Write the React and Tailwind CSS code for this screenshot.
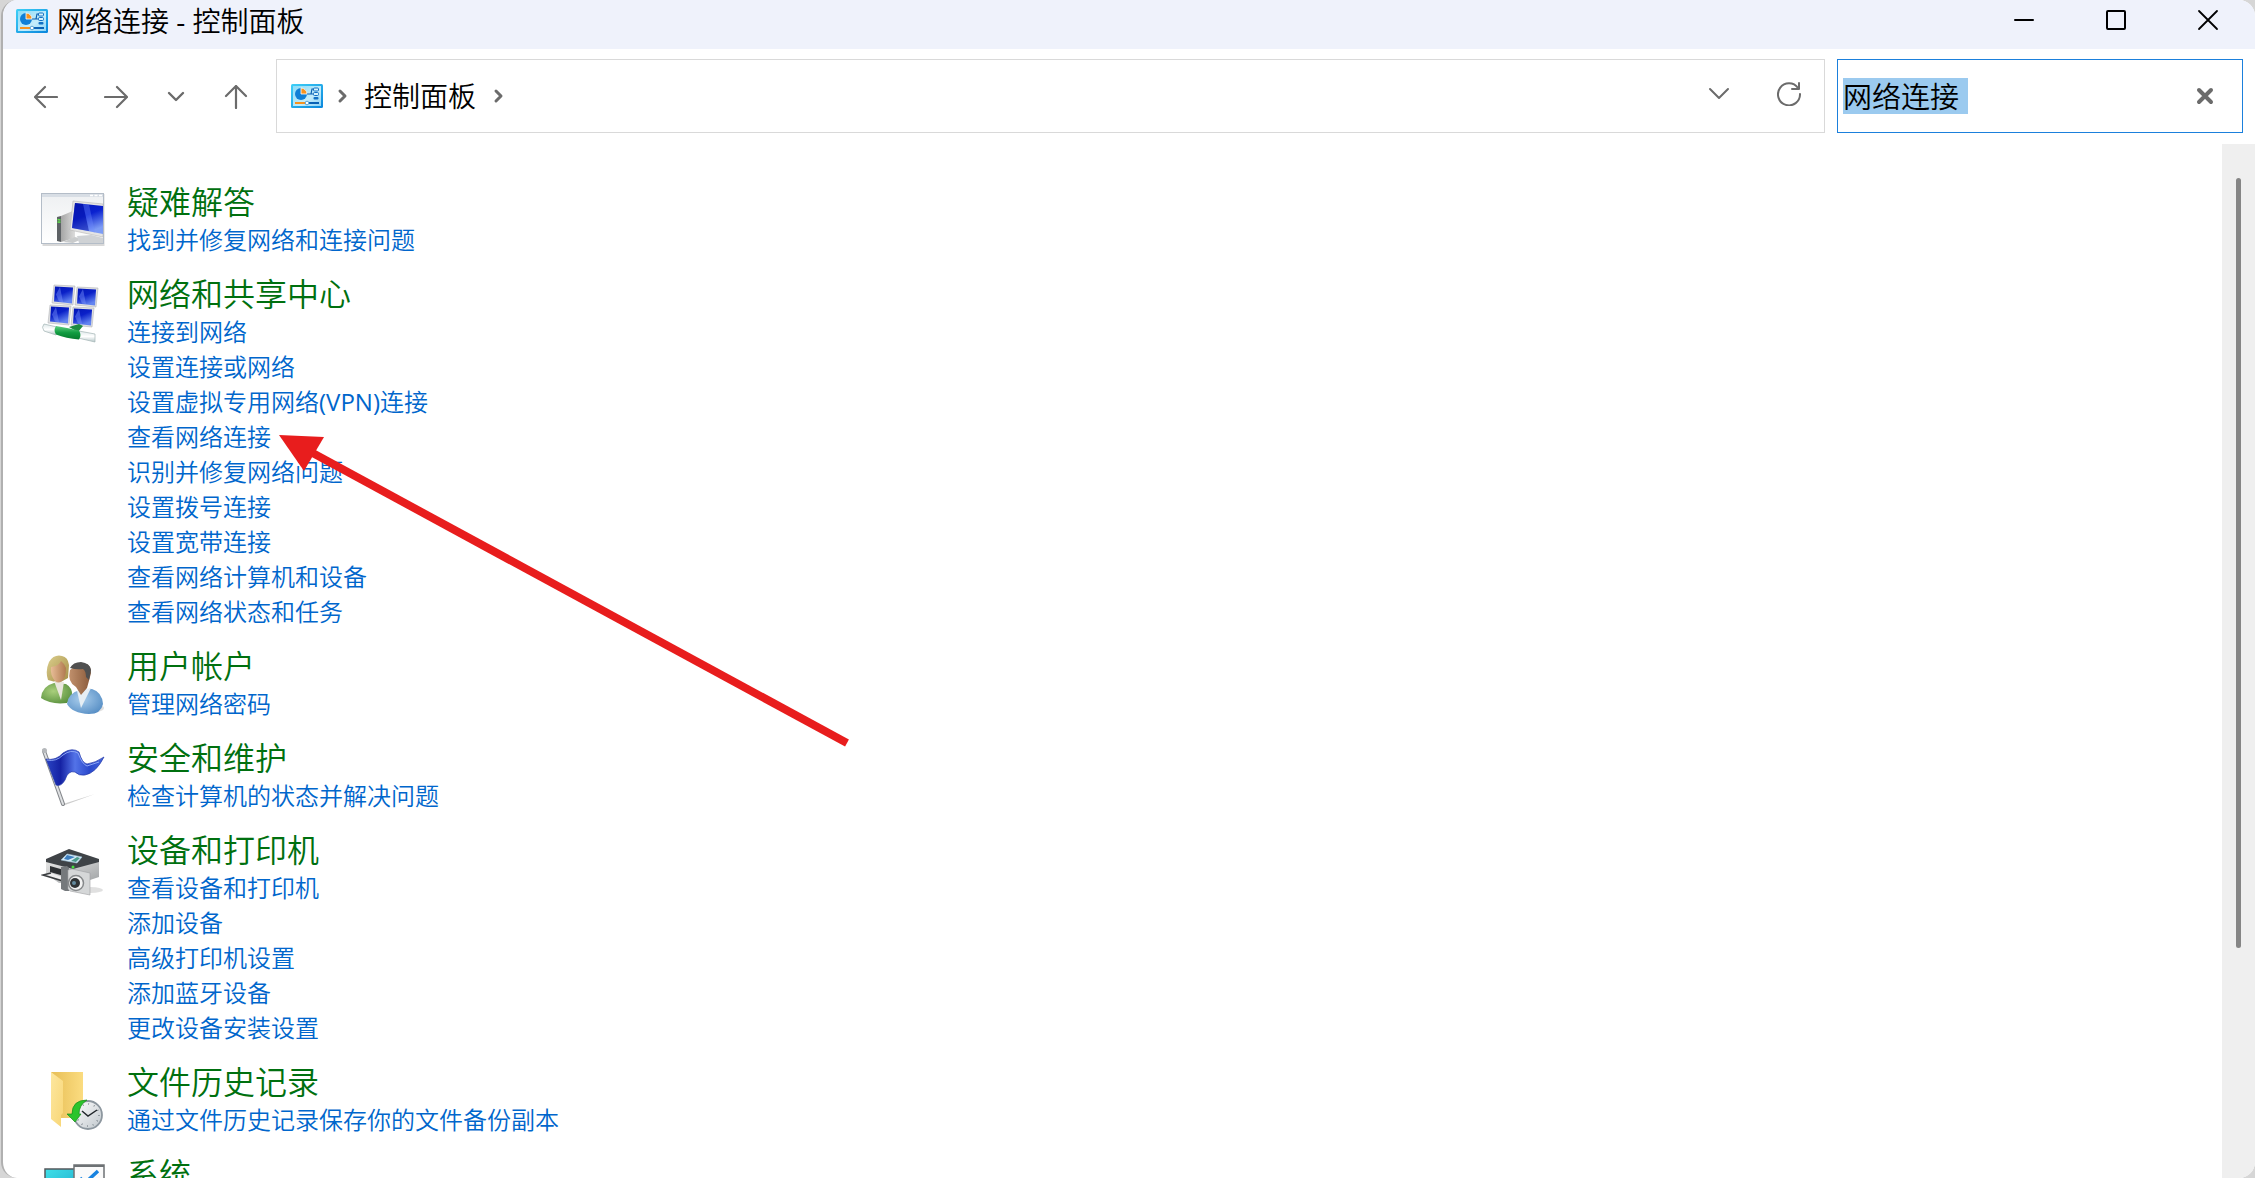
import React from 'react';

const ControlPanelIcon = () => (
    <svg viewBox="0 0 32 26" className="h-[26px] w-8 shrink-0" aria-hidden="true">
        <defs>
            <linearGradient id="cpFrame" x1="0" y1="0" x2="1" y2="1">
                <stop offset="0" stopColor="#3fd0f7" />
                <stop offset="1" stopColor="#0a86dc" />
            </linearGradient>
            <linearGradient id="cpFace" x1="0" y1="0" x2="1" y2="1">
                <stop offset="0" stopColor="#8adcf8" />
                <stop offset="0.6" stopColor="#c4ecfb" />
                <stop offset="1" stopColor="#8fd4f5" />
            </linearGradient>
        </defs>
        <rect x="0" y="1" width="32" height="24" rx="1.5" fill="url(#cpFrame)" />
        <rect x="2" y="3" width="28" height="20" fill="url(#cpFace)" />
        <circle cx="10" cy="11" r="6" fill="#0f7fd6" />
        <path d="M10 11V5a6 6 0 0 1 6 6z" fill="#f7931e" stroke="#fff" strokeWidth="0.8" />
        <path d="M16 11h4l1-5h2M20 11h3" stroke="#0a5cad" strokeWidth="1.2" fill="none" />
        <rect x="22.5" y="5" width="5" height="3" rx="1" fill="#d5f2fd" stroke="#1270c4" />
        <rect x="22.5" y="9.5" width="5" height="3" rx="1" fill="#d5f2fd" stroke="#1270c4" />
        <rect x="22.5" y="14" width="5" height="2.5" rx="1" fill="#1270c4" />
        <path d="M4 20h10" stroke="#f7931e" strokeWidth="2" />
        <path d="M18 20h10" stroke="#0a62b5" strokeWidth="2" />
        <circle cx="16" cy="20" r="1.8" fill="#fff" stroke="#3b8fc9" strokeWidth="0.8" />
    </svg>
);

const TroubleshootIcon = () => (
    <svg viewBox="0 0 64 56" className="h-14 w-16" aria-hidden="true">
        <defs>
            <linearGradient id="tsScreen" x1="0" y1="0" x2="0.4" y2="1">
                <stop offset="0" stopColor="#0618b4" />
                <stop offset="0.5" stopColor="#0a22d0" />
                <stop offset="1" stopColor="#7d9cf5" />
            </linearGradient>
            <linearGradient id="tsWall" x1="0" y1="0" x2="0" y2="1">
                <stop offset="0" stopColor="#eef0f2" />
                <stop offset="1" stopColor="#fff" />
            </linearGradient>
            <linearGradient id="tsTower" x1="0" y1="0" x2="1" y2="0">
                <stop offset="0" stopColor="#a5a5a5" />
                <stop offset="1" stopColor="#dcdcdc" />
            </linearGradient>
        </defs>
        <rect x="1.5" y="3" width="62" height="52" fill="#000" opacity="0.15" />
        <rect x="0.5" y="2.5" width="62" height="50" fill="url(#tsWall)" stroke="#b4bdc8" />
        <rect x="1" y="3" width="61" height="3" fill="#d8dee5" />
        <path d="M49 4.5h3M53.5 4.5h3M58 4.5h3" stroke="#fff" strokeWidth="1.5" />
        <path d="M16 26l4-1v26l-4-1z" fill="#5d6165" />
        <path d="M16.5 28.5l3 .5M16.5 31l3 .3" stroke="#5ee04b" strokeWidth="1.5" />
        <path d="M20 25l14-6v28l-14 4z" fill="url(#tsTower)" />
        <path d="M22 51l12-5 7 2-9 4z" fill="#c9cbcc" />
        <path d="M36 45l14-1 12 3v5H38z" fill="#cfd2d5" />
        <path d="M32 10l30 3v33L29 39z" fill="#e4e4e4" stroke="#b5b5b5" strokeWidth="0.6" />
        <path d="M34 12l28 3v28L31 37z" fill="url(#tsScreen)" />
        <path d="M34 12l8 1 6 27-17-3z" fill="#0312a8" opacity="0.5" />
        <path d="M42 13l6 .6 6 28-6-1.500z" fill="#6f8cff" opacity="0.35" />
    </svg>
);

const monitors = [
    [12, 2],
    [35, 4],
    [8, 22],
    [31, 24],
];

const NetworkIcon = () => (
    <svg viewBox="0 0 64 62" className="h-[62px] w-16" aria-hidden="true">
        <defs>
            <linearGradient id="netScreen" x1="0" y1="0" x2="0.5" y2="1">
                <stop offset="0" stopColor="#0316b5" />
                <stop offset="0.5" stopColor="#0a20c8" />
                <stop offset="1" stopColor="#6384f0" />
            </linearGradient>
            <linearGradient id="netTube" x1="0" y1="0" x2="0" y2="1">
                <stop offset="0" stopColor="#dfe9ea" />
                <stop offset="0.5" stopColor="#fff" />
                <stop offset="1" stopColor="#b5c6c8" />
            </linearGradient>
            <linearGradient id="netPlug" x1="0" y1="0" x2="0" y2="1">
                <stop offset="0" stopColor="#5fcf80" />
                <stop offset="0.5" stopColor="#109c40" />
                <stop offset="1" stopColor="#067a2c" />
            </linearGradient>
        </defs>
        {monitors.map(([x, y]) => (
            <g key={`${x}-${y}`}>
                <path d={`M${x + 1} ${y}l21 1-2 19-21-2z`} fill="#dedfe0" stroke="#b3b5b8" strokeWidth="0.6" />
                <path d={`M${x + 2} ${y + 1.5}l18 1-1 16-18-2z`} fill="url(#netScreen)" />
                <path d={`M${x + 7} ${y + 2}l3 15-4-.5-3-7z`} fill="#86a0ff" opacity="0.4" />
            </g>
        ))}
        <path d="M28 44l10-3 4 2-5 6z" fill="#1d8b42" />
        <path d="M3 41l13 3-1 8-12-4q-3-4 0-7z" fill="url(#netTube)" stroke="#a3b5b5" strokeWidth="0.7" />
        <path d="M38 48l16 3v8l-17-4z" fill="url(#netTube)" stroke="#a3b5b5" strokeWidth="0.7" />
        <path d="M15 43q12 2 23 4.5 3 5 0 9-13-1-23-5-3-4 0-8.5z" fill="url(#netPlug)" />
    </svg>
);

const UsersIcon = () => (
    <svg viewBox="0 0 64 62" className="h-[62px] w-16" aria-hidden="true">
        <defs>
            <radialGradient id="usGreen" cx="0.4" cy="0.4" r="0.7">
                <stop offset="0" stopColor="#a9cf7c" />
                <stop offset="1" stopColor="#578f3c" />
            </radialGradient>
            <radialGradient id="usBlue" cx="0.4" cy="0.4" r="0.7">
                <stop offset="0" stopColor="#a9cdec" />
                <stop offset="1" stopColor="#558dc4" />
            </radialGradient>
            <linearGradient id="usHair" x1="0" y1="0" x2="1" y2="1">
                <stop offset="0" stopColor="#dccf8d" />
                <stop offset="1" stopColor="#a38c45" />
            </linearGradient>
            <linearGradient id="usSkin" x1="0" y1="0" x2="1" y2="0">
                <stop offset="0" stopColor="#e8bd97" />
                <stop offset="1" stopColor="#b07a50" />
            </linearGradient>
            <linearGradient id="usSkin2" x1="0" y1="0" x2="1" y2="0">
                <stop offset="0" stopColor="#c0906c" />
                <stop offset="1" stopColor="#8a5a3a" />
            </linearGradient>
        </defs>
        <ellipse cx="48" cy="53" rx="15" ry="5" fill="#000" opacity="0.12" />
        <path d="M8 7q5-8 13-6 6 1 7 9l-1 13-9 5-11-3q-3-9 1-18z" fill="url(#usHair)" />
        <path d="M0 43q1-12 13-15l12 1q7 4 6 12l-5 7q-16 2-26-5z" fill="url(#usGreen)" />
        <path d="M13 26l10 1-3 18z" fill="#e9e6dd" />
        <path d="M10 12q8-1 10-6 4 3 5 7 0 10-4 13-4 3-7 0-5-6-4-14z" fill="url(#usSkin)" />
        <path d="M26 49q1-11 13-14l12-1q10 3 11 15-2 10-14 10-17-1-22-10z" fill="url(#usBlue)" />
        <path d="M36 36l14-3-10 20z" fill="#e6eef4" />
        <path d="M29 15q8-7 17-6 6 4 3 13l-3 11-6 7-5-8q-9-5-6-17z" fill="url(#usSkin2)" />
        <path d="M29 13q3-6 11-6 9 1 10 8l-2 10-3-3q0-6-3-8-6 1-13-1z" fill="#505050" />
    </svg>
);

const FlagIcon = () => (
    <svg viewBox="0 0 64 60" className="h-[60px] w-16" aria-hidden="true">
        <defs>
            <linearGradient id="flCloth" x1="0" y1="0" x2="1" y2="0">
                <stop offset="0" stopColor="#2a44c4" />
                <stop offset="0.25" stopColor="#1522a4" />
                <stop offset="0.5" stopColor="#5373e8" />
                <stop offset="0.75" stopColor="#2a49cc" />
                <stop offset="1" stopColor="#4467dd" />
            </linearGradient>
        </defs>
        <path d="M22 57l32-10-30 11z" fill="#000" opacity="0.2" />
        <path d="M3 4l19 53" stroke="#85888c" strokeWidth="4" strokeLinecap="round" />
        <path d="M3 4l19 53" stroke="#dfe1e3" strokeWidth="2" strokeLinecap="round" />
        <path d="M5 12q10 2 17-6 9-6 16-1 3 11 8 12 8-1 17-7-8 16-19 18-6 1-10-3-7-2-10 8-4 7-9 5z" fill="url(#flCloth)" stroke="#2438a8" strokeWidth="0.7" />
        <path d="M6 13q9 2 16-5 8-6 15-2 4 11 9 13l12-4" stroke="#8ca5f5" strokeWidth="1" fill="none" />
        <circle cx="3.5" cy="3.5" r="2.5" fill="#b5b8bb" />
    </svg>
);

const PrinterIcon = () => (
    <svg viewBox="0 -7 64 57" className="h-[57px] w-16" aria-hidden="true">
        <defs>
            <linearGradient id="prBody" x1="0" y1="0" x2="1" y2="1">
                <stop offset="0" stopColor="#e6e6e6" />
                <stop offset="1" stopColor="#9fa2a4" />
            </linearGradient>
        </defs>
        <ellipse cx="50" cy="44" rx="12" ry="3" fill="#000" opacity="0.12" />
        <path d="M5 15l24 7 29-7v16l-12 4-28 2L5 28z" fill="url(#prBody)" />
        <path d="M5 13L28 3l30 10v3l-26 7L5 16z" fill="#3f4347" />
        <path d="M26 8l15 3-5 6-16-3z" fill="#d8ecf7" stroke="#9fc4dc" strokeWidth="0.6" />
        <path d="M26 9l8 2-7 3-4-1z" fill="#3e7fc0" />
        <path d="M36 11l3 1-4 4-5-1z" fill="#4c9b8c" />
        <path d="M9 20l14 4v6l-14-4z" fill="#2d3033" />
        <path d="M10 27l-8 2 20 6 2-3" fill="#eee" stroke="#3b3e40" strokeWidth="1.5" />
        <path d="M20 21l6-1 2 2v23h-4l-4-2z" fill="#75797c" />
        <path d="M27 24l4-1 18 4v22l-20-4-2-2z" fill="#d5d7d8" stroke="#9da0a2" strokeWidth="0.6" />
        <circle cx="35" cy="37" r="7.5" fill="#f2f2f2" stroke="#85888a" strokeWidth="1.5" />
        <circle cx="34" cy="37" r="5" fill="#303436" />
        <circle cx="33" cy="37" r="2" fill="#648b9f" />
        <circle cx="32" cy="21" r="1.5" fill="#45e03e" />
    </svg>
);

const FileHistoryIcon = () => (
    <svg viewBox="0 0 64 64" className="size-16" aria-hidden="true">
        <defs>
            <linearGradient id="fhBack" x1="0" y1="0" x2="1" y2="0">
                <stop offset="0" stopColor="#e7be56" />
                <stop offset="1" stopColor="#fbdc80" />
            </linearGradient>
            <linearGradient id="fhFront" x1="0" y1="0" x2="1" y2="1">
                <stop offset="0" stopColor="#fde79f" />
                <stop offset="1" stopColor="#f8d676" />
            </linearGradient>
            <linearGradient id="fhClock" x1="0" y1="0" x2="1" y2="1">
                <stop offset="0" stopColor="#fff" />
                <stop offset="1" stopColor="#c0c7cc" />
            </linearGradient>
        </defs>
        <path d="M10 1h32v46H20z" fill="url(#fhBack)" />
        <path d="M10 1l12 9v32l-2 2v12L10 48z" fill="url(#fhFront)" />
        <circle cx="47" cy="44" r="14" fill="url(#fhClock)" stroke="#8d979f" strokeWidth="1.8" />
        <circle cx="47" cy="44" r="11" fill="none" stroke="#727b82" strokeWidth="1.6" strokeDasharray="0.8 4.96" />
        <path d="M41 40l6 5 9-6" fill="none" stroke="#24292d" strokeWidth="1.5" />
        <path d="M46 29q-15 0-15 14h-5l8 8 6-8h-2q0-9 8-14z" fill="#2cc42c" stroke="#168c1a" strokeWidth="0.7" />
    </svg>
);

const SystemIcon = () => (
    <svg viewBox="0 0 64 48" className="h-12 w-16" aria-hidden="true">
        <defs>
            <linearGradient id="syScreen" x1="0" y1="0" x2="1" y2="1">
                <stop offset="0" stopColor="#3fe0e8" />
                <stop offset="1" stopColor="#149bc4" />
            </linearGradient>
        </defs>
        <rect x="4" y="6" width="44" height="34" fill="url(#syScreen)" stroke="#54585c" strokeWidth="1.5" />
        <rect x="33" y="2" width="30" height="38" fill="#fafafa" stroke="#6d7174" strokeWidth="1.5" />
        <path d="M33 3h30" stroke="#6d7174" strokeWidth="2" />
        <path d="M39 15l5 5L57 8" fill="none" stroke="#1883e0" strokeWidth="3.5" />
    </svg>
);

const groups = [
    { title: '疑难解答', Icon: TroubleshootIcon, links: ['找到并修复网络和连接问题'] },
    {
        title: '网络和共享中心',
        Icon: NetworkIcon,
        links: [
            '连接到网络',
            '设置连接或网络',
            '设置虚拟专用网络(VPN)连接',
            '查看网络连接',
            '识别并修复网络问题',
            '设置拨号连接',
            '设置宽带连接',
            '查看网络计算机和设备',
            '查看网络状态和任务',
        ],
    },
    { title: '用户帐户', Icon: UsersIcon, links: ['管理网络密码'] },
    { title: '安全和维护', Icon: FlagIcon, links: ['检查计算机的状态并解决问题'] },
    {
        title: '设备和打印机',
        Icon: PrinterIcon,
        links: ['查看设备和打印机', '添加设备', '高级打印机设置', '添加蓝牙设备', '更改设备安装设置'],
    },
    { title: '文件历史记录', Icon: FileHistoryIcon, links: ['通过文件历史记录保存你的文件备份副本'] },
    { title: '系统', Icon: SystemIcon, links: [] },
];

const LineIcon = ({ d, className, width = 2 }) => (
    <svg viewBox="0 0 24 24" className={className} fill="none" stroke="currentColor" strokeWidth={width} strokeLinecap="round" strokeLinejoin="round" aria-hidden="true">
        <path d={d} />
    </svg>
);

function TitleBar() {
    return (
        <header className="flex h-[49px] shrink-0 items-start justify-between bg-[#eff2fb] pl-[13px]">
            <div className="flex h-[42px] items-center gap-[9px]">
                <ControlPanelIcon />
                <h1 className="text-[28px] leading-[42px] text-black">网络连接 - 控制面板</h1>
            </div>
            <div className="flex h-10 pr-px text-black">
                <button type="button" aria-label="最小化" className="flex w-[92px] items-center justify-center">
                    <LineIcon d="M3 12h18" className="size-6" />
                </button>
                <button type="button" aria-label="最大化" className="flex w-[92px] items-center justify-center">
                    <LineIcon d="M4 3h16a1 1 0 0 1 1 1v16a1 1 0 0 1-1 1H4a1 1 0 0 1-1-1V4a1 1 0 0 1 1-1z" className="size-6" />
                </button>
                <button type="button" aria-label="关闭" className="flex w-[92px] items-center justify-center">
                    <LineIcon d="M3 3l18 18M21 3L3 21" className="size-6" width={1.8} />
                </button>
            </div>
        </header>
    );
}

function Toolbar() {
    return (
        <div className="flex h-[95px] shrink-0 items-center pr-3 pb-px pl-[31px] text-[#6b6b6b]">
            <nav className="mr-7 flex items-center gap-9 pt-0.5">
                <button type="button" aria-label="后退">
                    <LineIcon d="M23 12H1M11 2L1 12l10 10" className="size-6" width={2.2} />
                </button>
                <button type="button" aria-label="前进" className="ml-[10px]">
                    <LineIcon d="M1 12h22M13 2l10 10-10 10" className="size-6" width={2.2} />
                </button>
                <button type="button" aria-label="最近浏览的位置">
                    <LineIcon d="M5 8l7 7 7-7" className="size-6" width={2.4} />
                </button>
                <button type="button" aria-label="向上">
                    <LineIcon d="M12 23V1M2 11L12 1l10 10" className="size-6" width={2.2} />
                </button>
            </nav>
            <div className="mr-3 flex h-[74px] flex-1 items-center border border-[#d9d9d9] pr-[23px] pl-[14px]">
                <ControlPanelIcon />
                <LineIcon d="M10 7l5 5-5 5" className="ml-[7px] size-6" width={3} />
                <a href="#" className="mx-[10px] text-[28px] leading-[42px] text-black">控制面板</a>
                <LineIcon d="M10 7l5 5-5 5" className="size-6" width={3} />
                <button type="button" aria-label="以前的位置" className="ml-auto pb-1">
                    <LineIcon d="M3 7l9 9 9-9" className="size-6" />
                </button>
                <button type="button" aria-label="刷新" className="ml-[46px] pb-1">
                    <LineIcon d="M21 6A11 11 0 1 0 23 12M22 1v6h-7" className="size-6" />
                </button>
            </div>
            <div className="flex h-[74px] w-[406px] items-center border border-[#1b80dc] pr-[25px] pl-[5px]">
                <label htmlFor="search" className="sr-only">搜索控制面板</label>
                <div className="min-w-0 flex-1">
                    <input
                        id="search"
                        type="text"
                        defaultValue="网络连接 "
                        className="h-9 w-[125px] bg-[#9bcaef] pt-0.5 text-[29px] leading-9 text-black outline-none"
                    />
                </div>
                <button type="button" aria-label="清除">
                    <LineIcon d="M6 6l12 12M18 6L6 18" className="size-6" width={4} />
                </button>
            </div>
        </div>
    );
}

function ResultGroup({ title, Icon, links }) {
    return (
        <section className="flex gap-[22px]">
            <div className="w-16 shrink-0 pt-[10px]">
                <Icon />
            </div>
            <div>
                <h2 className="text-[32px] leading-[41px] text-[#00700f]">{title}</h2>
                <ul>
                    {links.map((link) => (
                        <li key={link} className="h-[35px] text-2xl leading-[35px]">
                            <a href="#" className="text-[#0066cc]">{link}</a>
                        </li>
                    ))}
                </ul>
            </div>
        </section>
    );
}

// Red pointer drawn over the result list
const PointerArrow = () => (
    <svg viewBox="0 0 572 312" className="pointer-events-none absolute top-[291px] left-[276px] h-[312px] w-[572px]" aria-hidden="true">
        <path d="M30 16l538 292" stroke="#e81d1d" strokeWidth="8" />
        <path d="M0 0l45 2-20 34z" fill="#e81d1d" />
    </svg>
);

function App() {
    return (
        <div className="h-screen bg-[#d6d6d6] pl-px font-['Open_Sans','Noto_Sans_CJK_SC_DemiLight','Noto_Sans_CJK_SC',sans-serif] font-normal">
            <div className="flex h-full flex-col overflow-hidden rounded-2xl border-l-2 border-[#b0b0b0] bg-white">
                <TitleBar />
                <Toolbar />
                <div className="flex min-h-0 flex-1">
                    <main className="relative flex min-w-0 flex-1 flex-col gap-4 overflow-hidden pt-[37px] pl-[38px]">
                        {groups.map((group) => (
                            <ResultGroup key={group.title} {...group} />
                        ))}
                        <PointerArrow />
                    </main>
                    <div className="flex w-[33px] justify-center bg-[#efefef] pt-[34px]">
                        <div className="h-[77%] w-[5px] rounded-full bg-[#858585]" />
                    </div>
                </div>
            </div>
        </div>
    );
}

export default App;
